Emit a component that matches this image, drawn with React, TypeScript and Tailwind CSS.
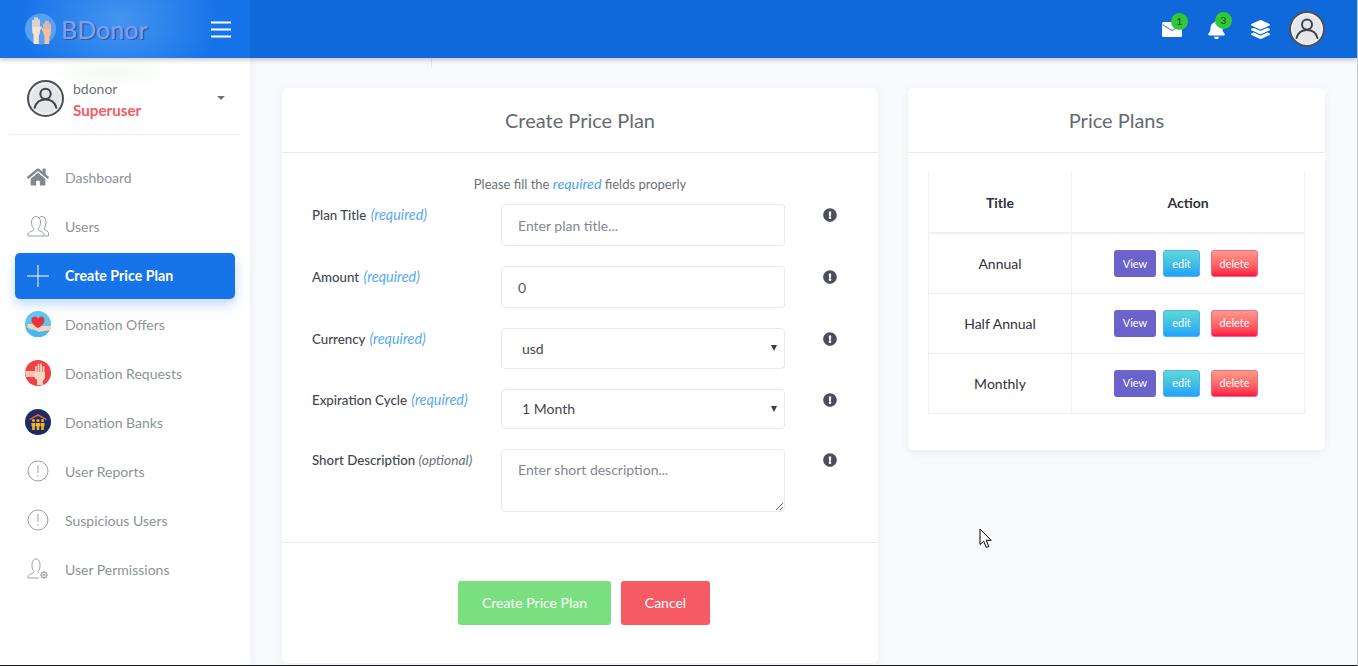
import React from "react";
import { FaBell, FaExclamationCircle, FaHome, FaLayerGroup } from "react-icons/fa";

const Avatar = ({ size }: { size: number }) => (
  <svg width={size} height={size} viewBox="0 0 36 36" className="shrink-0">
    <circle cx="18" cy="18" r="17" fill="#f0f0f3" stroke="#4d5159" strokeWidth="2" />
    <circle cx="18" cy="18" r="14" fill="#e6e6ea" />
    <circle cx="18" cy="13.5" r="5" fill="none" stroke="#3f434b" strokeWidth="2" />
    <path d="M7.5 27c1.5-5.5 5.5-8 10.5-8s9 2.500 10.500 8" fill="none" stroke="#3f434b" strokeWidth="2" strokeLinecap="round" />
  </svg>
);

const Users = () => (
  <svg width="22" height="22" viewBox="0 0 22 22" fill="none" stroke="#9aa0a5" strokeWidth="1">
    <path d="M1 21v-2c0-1.500 2-2.200 4-3 1.500-.6 2-1 2-2-1.500-1.500-2.500-3.500-2.500-7C4.500 3.500 6.500 1.500 9 1.500s4.500 2 4.500 5.500c0 3.500-1 5.500-2.500 7 0 1 .5 1.400 2 2 2 .8 4 1.500 4 3v2z" />
    <path d="M12.500 2.500c.8-.7 1.700-1 2.500-1 2.500 0 4 2 4 5.500 0 3-.7 5-1.800 6.500 0 1 .6 1.500 1.800 2 1.500.6 2.500 1.300 2.500 3v2.500h-4" />
  </svg>
);

const Plus = () => (
  <svg width="22" height="22" viewBox="0 0 22 22" stroke="#fff" strokeWidth="1">
    <path d="M11 0v22M0 11h22" />
  </svg>
);

const Offers = () => (
  <svg width="26" height="26" viewBox="0 0 26 26">
    <circle cx="13" cy="13" r="13" fill="#62c6f0" />
    <path d="M0.500 17a13 13 0 0 0 25 0z" fill="#45b9f2" />
    <path d="M3 13h6l3 2h14v4l-7 1c-2 .5-4 1-6 .5l-4-2H4l2-1H3l1-1H2z" fill="#fbd3bb" />
    <path d="M13 17c-3.500-2-6.500-4.500-6.500-8 0-2.200 1.600-3.500 3.300-3.500 1.300 0 2.500.8 3.200 2.200.7-1.400 1.900-2.200 3.200-2.200 1.700 0 3.300 1.300 3.300 3.500 0 3.500-3 6-6.500 8z" fill="#e8333c" />
  </svg>
);

const Requests = () => (
  <svg width="26" height="26" viewBox="0 0 26 26">
    <circle cx="13" cy="13" r="13" fill="#ee4045" />
    <path d="M0 11h9l5 1v3l-5 2H1z" fill="#f8c3ac" />
    <g stroke="#fbd6c3" strokeWidth="1.800" strokeLinecap="round">
      <path d="M11 13V7M13.500 13V4.500M16 13V4.500M18.500 14V7" />
    </g>
    <path d="M10 12h10v6l-2 3v4h-6v-5l-3-3z" fill="#fbd6c3" />
  </svg>
);

const Banks = () => (
  <svg width="26" height="26" viewBox="0 0 26 26">
    <circle cx="13" cy="13" r="13" fill="#1d2a63" />
    <path d="M4 10l9-5 9 5-1 1-8-4-8 4z" fill="#e2603d" />
    <g fill="#f2b422">
      <circle cx="8.500" cy="11.500" r="1.500" />
      <circle cx="13" cy="11.500" r="1.500" />
      <circle cx="17.500" cy="11.500" r="1.500" />
      <path d="M6.500 14h4v3l-.7.500v3.500H7.200v-3.500l-.7-.500z" />
      <path d="M11 14h4v3l-.7.500v3.500h-2.600v-3.500l-.7-.500z" />
      <path d="M15.500 14h4v3l-.7.500v3.500h-2.600v-3.500l-.7-.500z" />
    </g>
  </svg>
);

const Alert = () => (
  <svg width="22" height="22" viewBox="0 0 22 22" fill="none" stroke="#9aa0a5" strokeWidth="1">
    <circle cx="11" cy="11" r="10" />
    <path d="M11 5v8M11 15v1.500" />
  </svg>
);

const Perm = () => (
  <svg width="22" height="22" viewBox="0 0 22 22" fill="none" stroke="#9aa0a5" strokeWidth="1">
    <path d="M1 20v-1.500c0-1.500 2-2.200 4-3 1.500-.6 2-1 2-2-1.200-1.200-2-3-2-6.500 0-3.500 1.500-6 4-6s4 2.500 4 6c0 3.500-.8 5.300-2 6.500 0 .8.200 1.200.8 1.600M1 20h11" />
    <circle cx="17" cy="17" r="2.800" />
    <circle cx="17" cy="17" r="1" />
    <path d="M17 13v1.200M17 19.800V21M13 17h1.200M19.800 17H21M14.200 14.200l.8.800M19 19l.8.800M14.200 19.800l.8-.8M19 15l.8-.8" />
  </svg>
);

const nav: { label: string; icon: React.ReactNode; active?: boolean }[] = [
  { label: "Dashboard", icon: <FaHome size={22} color="#7f8a90" /> },
  { label: "Users", icon: <Users /> },
  { label: "Create Price Plan", icon: <Plus />, active: true },
  { label: "Donation Offers", icon: <Offers /> },
  { label: "Donation Requests", icon: <Requests /> },
  { label: "Donation Banks", icon: <Banks /> },
  { label: "User Reports", icon: <Alert /> },
  { label: "Suspicious Users", icon: <Alert /> },
  { label: "User Permissions", icon: <Perm /> },
];

const Row = ({
  title,
  tag,
  optional,
  children,
  mb = true,
}: {
  title: string;
  tag: string;
  optional?: boolean;
  children: React.ReactNode;
  mb?: boolean;
}) => (
  <div className={`flex items-start ${mb ? "mb-[20px]" : ""}`}>
    <label className="w-[189px] shrink-0 pt-[2px] text-[13.300px] leading-[18px] text-[#44474f]" style={{ fontWeight: 500 }}>
      {title}{" "}
      <em className={`font-normal ${optional ? "text-[13.800px] text-[#6b6f76]" : "ml-[1px] text-[14.400px] text-[#5aa9f5]"}`}>{tag}</em>
    </label>
    <div className="w-[284px] shrink-0">{children}</div>
    <FaExclamationCircle size={14} color="#4c4f5a" className="ml-[38px] mt-[4px] shrink-0" />
  </div>
);

const fieldBase =
  "block w-full rounded-[4px] border border-[#e8e9f0] bg-white px-[16px] text-[14px] outline-none";

const Select = ({ value, h }: { value: string; h: string }) => (
  <div className="relative">
    <select className={`${fieldBase} ${h} appearance-none pl-[20px] text-[#44474f]`} defaultValue={value}>
      <option>{value}</option>
    </select>
    <span className="absolute right-[8px] top-[17px] h-0 w-0 border-x-[3px] border-t-[6px] border-x-transparent border-t-[#3c3f45]" />
  </div>
);

const plans = ["Annual", "Half Annual", "Monthly"];

const Cursor = () => (
  <svg width="14" height="21" viewBox="0 0 14 21" className="absolute left-[979px] top-[528px]">
    <path d="M1 1v15.500l3.700-3.300 2.600 6.300 2.500-1-2.600-6.200h5z" fill="#fff" stroke="#000" strokeWidth="1" />
  </svg>
);

export default function App() {
  return (
    <div className="relative flex h-[666px] w-[1358px] flex-col overflow-hidden border-b border-r border-b-[#14171c] border-r-[#c4c6cb] bg-[#f9fafd] font-['Lato','Inter',sans-serif]">
      <header className="relative z-20 flex h-[58px] shrink-0 items-center bg-[#1069da] shadow-[0_2px_5px_rgba(0,0,0,0.22)]">
        <div className="relative flex h-full w-[250px] shrink-0 items-center justify-between overflow-hidden bg-[#1673e8] pl-[25px] pr-[19px]">
          <div className="absolute left-[20px] top-[-55px] h-[150px] w-[200px] rounded-full bg-[radial-gradient(closest-side,rgba(130,195,250,0.42),rgba(100,170,240,0))]" />
          <div className="relative flex items-center gap-[5px]">
            <svg width="31" height="32" viewBox="0 0 31 32">
              <circle cx="15.500" cy="16" r="15.500" fill="#58a0f0" />
              <g stroke="#fbe0cf" strokeWidth="1.600" strokeLinecap="round">
                <path d="M8 15V7.500M10 15V5M12 15V5M14 15V7" />
                <path d="M14 18l2-4" />
              </g>
              <path d="M7.200 14h7.600v6l-1 3v8H8.500v-9l-1.300-3z" fill="#fbe0cf" />
              <g stroke="#f8c09c" strokeWidth="1.600" strokeLinecap="round">
                <path d="M19 17V11M21 17V8.500M23 17V8.500M25 17V11" />
                <path d="M19 19l-1.800-3.500" />
              </g>
              <path d="M18.200 16h7.600v5l-1.500 3v7h-4.800v-8l-1.300-3z" fill="#f8c09c" />
            </svg>
            <span className="text-[25px] leading-none text-[#7ba2e8] [text-shadow:1.5px_1px_0_#3a55b0]" style={{ fontWeight: 500 }}>
              BDonor
            </span>
          </div>
          <svg width="20" height="17" viewBox="0 0 20 17" stroke="#fff" strokeWidth="2" className="relative">
            <path d="M0 1.500h20M0 8.500h20M0 15.500h20" />
          </svg>
        </div>
        <div className="flex flex-1 items-center justify-end pr-[32px]">
          <div className="relative mr-[25px] flex">
            <svg width="20" height="15" viewBox="0 0 20 15">
              <rect width="20" height="15" rx="1.500" fill="#fff" />
              <path d="M0.500 2.500L10 8.500l9.500-6" fill="none" stroke="#5c9ae8" strokeWidth="1.200" />
            </svg>
            <span className="absolute -right-[6px] -top-[9px] flex h-[17px] w-[17px] items-center justify-center rounded-full bg-[#30c935] text-[10px] leading-none text-[#1c3a2a]">
              1
            </span>
          </div>
          <div className="relative mr-[25px] flex">
            <FaBell size={19} color="#fff" />
            <span className="absolute -right-[6px] -top-[8px] flex h-[17px] w-[17px] items-center justify-center rounded-full bg-[#30c935] text-[10px] leading-none text-[#1c3a2a]">
              3
            </span>
          </div>
          <FaLayerGroup size={19} color="#fff" className="mr-[19px]" />
          <Avatar size={36} />
        </div>
      </header>

      <div className="flex min-h-0 flex-1">
        <aside className="relative z-10 flex w-[250px] shrink-0 flex-col bg-white shadow-[2px_0_8px_rgba(40,60,90,0.05)]">
          <div className="absolute left-[45px] top-0 h-[30px] w-[130px] bg-[radial-gradient(closest-side,rgba(200,235,200,0.22),rgba(255,255,255,0))]" />
          <div className="relative mx-[10px] flex h-[77px] items-center border-b border-[#edeef2] pl-[17px] pr-[15px] pt-[4px]">
            <Avatar size={37} />
            <div className="ml-[9px] flex-1 pt-[2px]">
              <div className="text-[14px] leading-[20px] text-[#6f7277]">bdonor</div>
              <div className="mt-[1px] text-[15.200px] font-bold leading-[20px] text-[#f55a65]">Superuser</div>
            </div>
            <span className="h-0 w-0 border-x-[4px] border-t-[4px] border-x-transparent border-t-[#6f7277]" />
          </div>
          <nav className="mt-[19px] flex flex-col gap-[3px] px-[15px]">
            {nav.map((n) => (
              <div
                key={n.label}
                className={`flex h-[46px] items-center rounded-[5px] ${
                  n.active ? "mb-[-1px] mt-[1px] bg-[#1673e8] shadow-[0_5px_12px_rgba(22,115,232,0.28)]" : ""
                }`}
              >
                <div className="flex w-[46px] shrink-0 justify-center">{n.icon}</div>
                <span className={`ml-[4px] ${n.active ? "text-[14.200px] font-bold text-white" : "text-[14px] text-[#8d9397]"}`}>
                  {n.label}
                </span>
              </div>
            ))}
          </nav>
        </aside>

        <main className="flex min-w-0 flex-1 items-start gap-[30px] pl-[32px] pt-[30px]">
          <section className="w-[596px] shrink-0 rounded-[5px] bg-white shadow-[0_2px_10px_rgba(60,70,110,0.07)]">
            <h2 className="flex h-[65px] items-center justify-center border-b border-[#e9eaee] text-[20px] text-[#666a70]">
              Create Price Plan
            </h2>
            <div className="border-b border-[#e9eaee] px-[30px] pb-[30px] pt-[22px]">
              <p className="mb-[11px] text-center text-[13px] leading-[18px] text-[#6c7177]">
                Please fill the <em className="text-[14.300px] text-[#4a9ff2]">required</em> fields properly
              </p>
              <Row title="Plan Title" tag="(required)">
                <input className={`${fieldBase} h-[42px] placeholder:text-[#858890]`} placeholder="Enter plan title..." />
              </Row>
              <Row title="Amount" tag="(required)">
                <input className={`${fieldBase} h-[42px] text-[#55585f]`} defaultValue="0" />
              </Row>
              <Row title="Currency" tag="(required)">
                <Select value="usd" h="h-[41px]" />
              </Row>
              <Row title="Expiration Cycle" tag="(required)">
                <Select value="1 Month" h="h-[40px] pb-[2px]" />
              </Row>
              <Row title="Short Description" tag="(optional)" optional mb={false}>
                <textarea
                  className={`${fieldBase} h-[63px] py-[10px] leading-[20px] placeholder:text-[#858890]`}
                  placeholder="Enter short description..."
                />
              </Row>
            </div>
            <div className="flex justify-center gap-[10px] pb-[37px] pl-[8px] pt-[38px] mb-[1px]">
              <button className="h-[44px] w-[153px] rounded-[3px] bg-[#7ae07f] pb-[2px] text-[14px] text-white">Create Price Plan</button>
              <button className="h-[44px] w-[89px] rounded-[3px] bg-[#f55a65] pb-[2px] text-[14px] text-white">Cancel</button>
            </div>
          </section>

          <section className="w-[417px] shrink-0 rounded-[5px] bg-white shadow-[0_2px_10px_rgba(60,70,110,0.07)]">
            <h2 className="flex h-[65px] items-center justify-center border-b border-[#e9eaee] text-[20px] text-[#666a70]">
              Price Plans
            </h2>
            <div className="px-[20px] pb-[36px] pt-[19px]">
              <table className="w-full table-fixed border-collapse text-[14px] text-[#2f3238]">
                <thead>
                  <tr className="h-[61px] border-b-2 border-[#eeeef4]">
                    <th className="w-[143px] border-x border-[#eeeef4] font-bold">Title</th>
                    <th className="border-x border-[#eeeef4] font-bold">Action</th>
                  </tr>
                </thead>
                <tbody>
                  {plans.map((p) => (
                    <tr key={p} className="h-[60px] border-b border-[#eeeef4]">
                      <td className="border-x border-[#eeeef4] text-center">{p}</td>
                      <td className="border-x border-[#eeeef4]">
                        <div className="flex items-center justify-center pr-[4px] text-[11px] text-white [text-shadow:0_0_0.5px_#fff]">
                          <button className="h-[27px] w-[42px] rounded-[3px] bg-[#6c62cc] pt-[1px]">View</button>
                          <button className="ml-[7px] h-[27px] w-[37px] rounded-[3px] border border-[#52b3f0] bg-linear-to-b from-[#5fd8d2] to-[#22a2fb] pt-[1px]">edit</button>
                          <button className="ml-[11px] h-[27px] w-[47px] rounded-[3px] border border-[#f36a7c] bg-linear-to-b from-[#fc9a8e] to-[#ff0844] pt-[1px]">delete</button>
                        </div>
                      </td>
                    </tr>
                  ))}
                </tbody>
              </table>
            </div>
          </section>
        </main>
      </div>
      <div className="absolute left-[431px] top-[58px] h-[10px] w-px bg-[#e6e7ec]" />
      <Cursor />
    </div>
  );
}
